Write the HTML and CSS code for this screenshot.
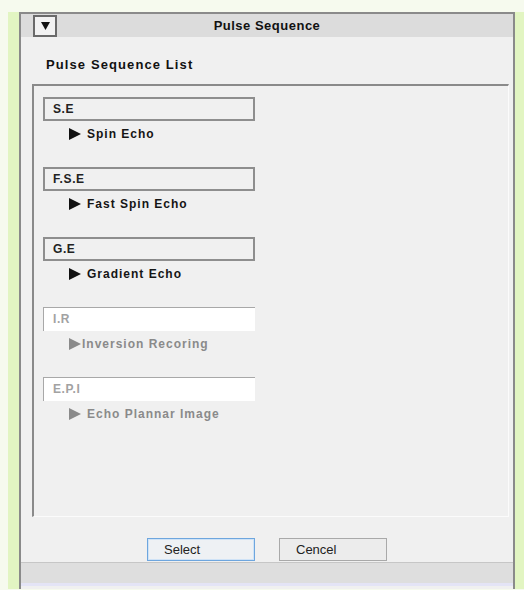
FILE: index.html
```html
<!DOCTYPE html>
<html lang="en">
<head>
<meta charset="utf-8">
<title>Pulse Sequence</title>
<link rel="stylesheet" href="styles.css">
</head>
<body>
<div class="window">
  <div class="titlebar">
    <span class="drop">
      <svg width="9" height="8" viewBox="0 0 9 8"><path d="M0 0H9L4.5 8Z" fill="#111"/></svg>
    </span>
    <span class="title">Pulse Sequence</span>
    <span></span>
  </div>
  <div class="content">
    <div class="list-title">Pulse Sequence List</div>
    <div class="panel">
      <div class="item">
        <div class="code">S.E</div>
        <div class="name"><svg class="arrow" width="12" height="12" viewBox="0 0 12 12"><path d="M0 0L12 6L0 12Z"/></svg>Spin Echo</div>
      </div>
      <div class="item">
        <div class="code">F.S.E</div>
        <div class="name"><svg class="arrow" width="12" height="12" viewBox="0 0 12 12"><path d="M0 0L12 6L0 12Z"/></svg>Fast Spin Echo</div>
      </div>
      <div class="item">
        <div class="code">G.E</div>
        <div class="name"><svg class="arrow" width="12" height="12" viewBox="0 0 12 12"><path d="M0 0L12 6L0 12Z"/></svg>Gradient Echo</div>
      </div>
      <div class="item disabled">
        <div class="code">I.R</div>
        <div class="name tight"><svg class="arrow" width="12" height="12" viewBox="0 0 12 12"><path d="M0 0L12 6L0 12Z"/></svg>Inversion Recoring</div>
      </div>
      <div class="item disabled">
        <div class="code">E.P.I</div>
        <div class="name"><svg class="arrow" width="12" height="12" viewBox="0 0 12 12"><path d="M0 0L12 6L0 12Z"/></svg>Echo Plannar Image</div>
      </div>
    </div>
    <div class="actions">
      <button class="btn primary">Select</button>
      <button class="btn">Cencel</button>
    </div>
  </div>
  <div class="status"></div>
</div>
</body>
</html>
```
FILE: styles.css
```css
html, body {
  margin: 0;
  padding: 0;
}

body {
  width: 524px;
  height: 590px;
  overflow: hidden;
  background: #f6faee;
  font-family: "Liberation Sans", Arial, sans-serif;
}

.window {
  margin: 12px 0 0 19px;
  width: 496px;
  box-sizing: border-box;
  border: 2px solid #8a8a8a;
  border-bottom: none;
  padding-bottom: 3px;
  background: #f0f0f0;
  box-shadow: -11px 0 0 #e2f5c2, 9px 0 0 #e2f5c2;
}

.titlebar {
  height: 23px;
  background: #dcdcdc;
  display: grid;
  grid-template-columns: 1fr auto 1fr;
  align-items: center;
}

.drop {
  justify-self: start;
  margin-left: 12px;
  width: 24px;
  height: 22px;
  box-sizing: border-box;
  border: 2px solid #6a6a6a;
  background: #f2f2f2;
  display: flex;
  align-items: center;
  justify-content: center;
}

.title {
  font-size: 13px;
  font-weight: bold;
  letter-spacing: 0.5px;
  color: #111;
}

.list-title {
  padding: 20px 0 11px 25px;
  line-height: 16px;
  font-size: 13px;
  font-weight: bold;
  letter-spacing: 1.1px;
  color: #111;
}

.panel {
  margin: 0 4px 0 11px;
  height: 433px;
  box-sizing: border-box;
  border-top: 2px solid #8a8a8a;
  border-left: 2px solid #8a8a8a;
  border-right: 1px solid #fbfbfb;
  border-bottom: 1px solid #fbfbfb;
  padding: 11px 0 0 9px;
  display: flex;
  flex-direction: column;
  gap: 20px;
}

.code {
  width: 212px;
  height: 24px;
  box-sizing: border-box;
  border: 2px solid #8e8e8e;
  background: #f0f0f0;
  padding-left: 8px;
  line-height: 20px;
  font-size: 12px;
  font-weight: bold;
  letter-spacing: 0.6px;
  color: #222;
}

.name {
  height: 26px;
  padding-left: 26px;
  display: flex;
  align-items: center;
  gap: 6px;
  font-size: 12px;
  font-weight: bold;
  letter-spacing: 1px;
  color: #151515;
}

.name.tight {
  gap: 1px;
}

.arrow path {
  fill: #111;
}

.disabled .code {
  background: #ffffff;
  border: none;
  border-top: 1px solid #a8a8a8;
  border-left: 1px solid #a8a8a8;
  padding-left: 9px;
  line-height: 23px;
  color: #a2a2a2;
}

.disabled .name {
  color: #8a8a8a;
}

.disabled .arrow path {
  fill: #8a8a8a;
}

.actions {
  padding: 21px 0 1px;
  display: flex;
  justify-content: center;
  gap: 24px;
}

.btn {
  width: 108px;
  height: 23px;
  box-sizing: border-box;
  margin: 0;
  padding: 0 0 0 16px;
  text-align: left;
  font-family: "Liberation Sans", Arial, sans-serif;
  font-size: 13px;
  color: #222;
  background: #ececec;
  border: 1px solid #a9a9a9;
}

.btn.primary {
  border: 1px solid #6ea6de;
  box-shadow: inset 0 0 0 1px #cfe3f7;
  background: #eef1f4;
}

.status {
  height: 20px;
  background: #dedede;
  border-top: 1px solid #c6c6c6;
  border-bottom: 3px solid #e4e4f6;
}
```
